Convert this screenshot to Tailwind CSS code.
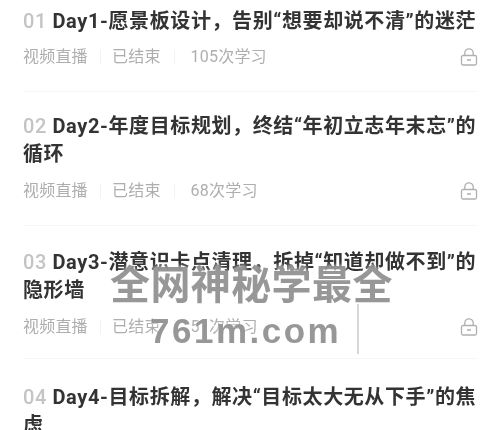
<!DOCTYPE html>
<html lang="zh-CN">
<head>
  <meta charset="UTF-8">
  <title>课程列表</title>
  <script src="https://cdn.jsdelivr.net/npm/@tailwindcss/browser@4"></script>
</head>
<body class="bg-white font-['Roboto','Noto_Sans_CJK_SC',sans-serif]">
  <div class="relative w-[500px] h-[430px] overflow-hidden">
    <div class="px-[23px] blur-[0.6px]">

      <!-- Day 1 -->
      <div class="pt-[7px] h-[92px] border-b border-[#f6f6f6]">
        <h3 class="text-[20px] tracking-[0.6px] leading-[28px] font-bold text-[#333] whitespace-nowrap"><span class="text-[#c4c4c4] font-medium">01</span> Day1-愿景板设计，告别“想要却说不清”的迷茫</h3>
        <div class="mt-[8px] flex items-center text-[16px] tracking-[0.2px] leading-[28px] text-[#aeaeae]">
          <span class="w-[65px] whitespace-nowrap">视频直播</span>
          <span class="ml-[12px] w-px h-[14px] bg-[#f3f3f3]"></span>
          <span class="ml-[11px]">已结束</span>
          <span class="ml-[13px] w-px h-[14px] bg-[#f3f3f3]"></span>
          <span class="ml-[16px]">105次学习</span>
          <svg class="ml-auto mr-[-1px]" width="18" height="18" viewBox="0 0 18 18" fill="none" stroke="#b0b0b0" stroke-width="1.3"><rect x="1.5" y="7.5" width="15" height="9.5" rx="1.5"/><path d="M4.8 7.5V5a4.2 4.2 0 0 1 8.4 0v2.5M7 12h4"/></svg>
        </div>
      </div>

      <!-- Day 2 -->
      <div class="pt-[20px] h-[134px] border-b border-[#f6f6f6]">
        <h3 class="text-[20px] tracking-[0.6px] leading-[28px] font-bold text-[#333]"><span class="text-[#c4c4c4] font-medium">02</span> Day2-年度目标规划，终结“年初立志年末忘”的循环</h3>
        <div class="mt-[9px] flex items-center text-[16px] tracking-[0.2px] leading-[28px] text-[#aeaeae]">
          <span class="w-[65px] whitespace-nowrap">视频直播</span>
          <span class="ml-[12px] w-px h-[14px] bg-[#f3f3f3]"></span>
          <span class="ml-[11px]">已结束</span>
          <span class="ml-[13px] w-px h-[14px] bg-[#f3f3f3]"></span>
          <span class="ml-[16px]">68次学习</span>
          <svg class="ml-auto mr-[-1px]" width="18" height="18" viewBox="0 0 18 18" fill="none" stroke="#b0b0b0" stroke-width="1.3"><rect x="1.5" y="7.5" width="15" height="9.5" rx="1.5"/><path d="M4.8 7.5V5a4.2 4.2 0 0 1 8.4 0v2.5M7 12h4"/></svg>
        </div>
      </div>

      <!-- Day 3 -->
      <div class="pt-[22px] h-[133px] border-b border-[#f6f6f6]">
        <h3 class="text-[20px] tracking-[0.6px] leading-[28px] font-bold text-[#333]"><span class="text-[#c4c4c4] font-medium">03</span> Day3-潜意识卡点清理，拆掉“知道却做不到”的隐形墙</h3>
        <div class="mt-[9px] flex items-center text-[16px] tracking-[0.2px] leading-[28px] text-[#aeaeae]">
          <span class="w-[65px] whitespace-nowrap">视频直播</span>
          <span class="ml-[12px] w-px h-[14px] bg-[#f3f3f3]"></span>
          <span class="ml-[11px]">已结束</span>
          <span class="ml-[13px] w-px h-[14px] bg-[#f3f3f3]"></span>
          <span class="ml-[16px]">51次学习</span>
          <svg class="ml-auto mr-[-1px]" width="18" height="18" viewBox="0 0 18 18" fill="none" stroke="#b0b0b0" stroke-width="1.3"><rect x="1.5" y="7.5" width="15" height="9.5" rx="1.5"/><path d="M4.8 7.5V5a4.2 4.2 0 0 1 8.4 0v2.5M7 12h4"/></svg>
        </div>
      </div>

      <!-- Day 4 -->
      <div class="pt-[24px]">
        <h3 class="text-[20px] tracking-[0.6px] leading-[28px] font-bold text-[#333]"><span class="text-[#c4c4c4] font-medium">04</span> Day4-目标拆解，解决“目标太大无从下手”的焦虑</h3>
      </div>
    </div>

    <!-- watermark -->
    <div class="absolute left-[110px] top-[262px] text-[40px] tracking-[0.4px] leading-[48px] font-bold text-[#8c8c8c]/90 whitespace-nowrap blur-[0.7px] [text-shadow:0_0_4px_white]">全网神秘学最全</div>
    <div class="absolute left-[150px] top-[310px] text-[35px] leading-[42px] font-bold tracking-[2.5px] text-[#8c8c8c]/90 whitespace-nowrap font-['Liberation_Sans',sans-serif] blur-[0.7px] [text-shadow:0_0_4px_white]">761m.com</div>
    <div class="absolute left-[357px] top-[304px] w-[2px] h-[50px] bg-[#d8d8d8]"></div>
  </div>
</body>
</html>
